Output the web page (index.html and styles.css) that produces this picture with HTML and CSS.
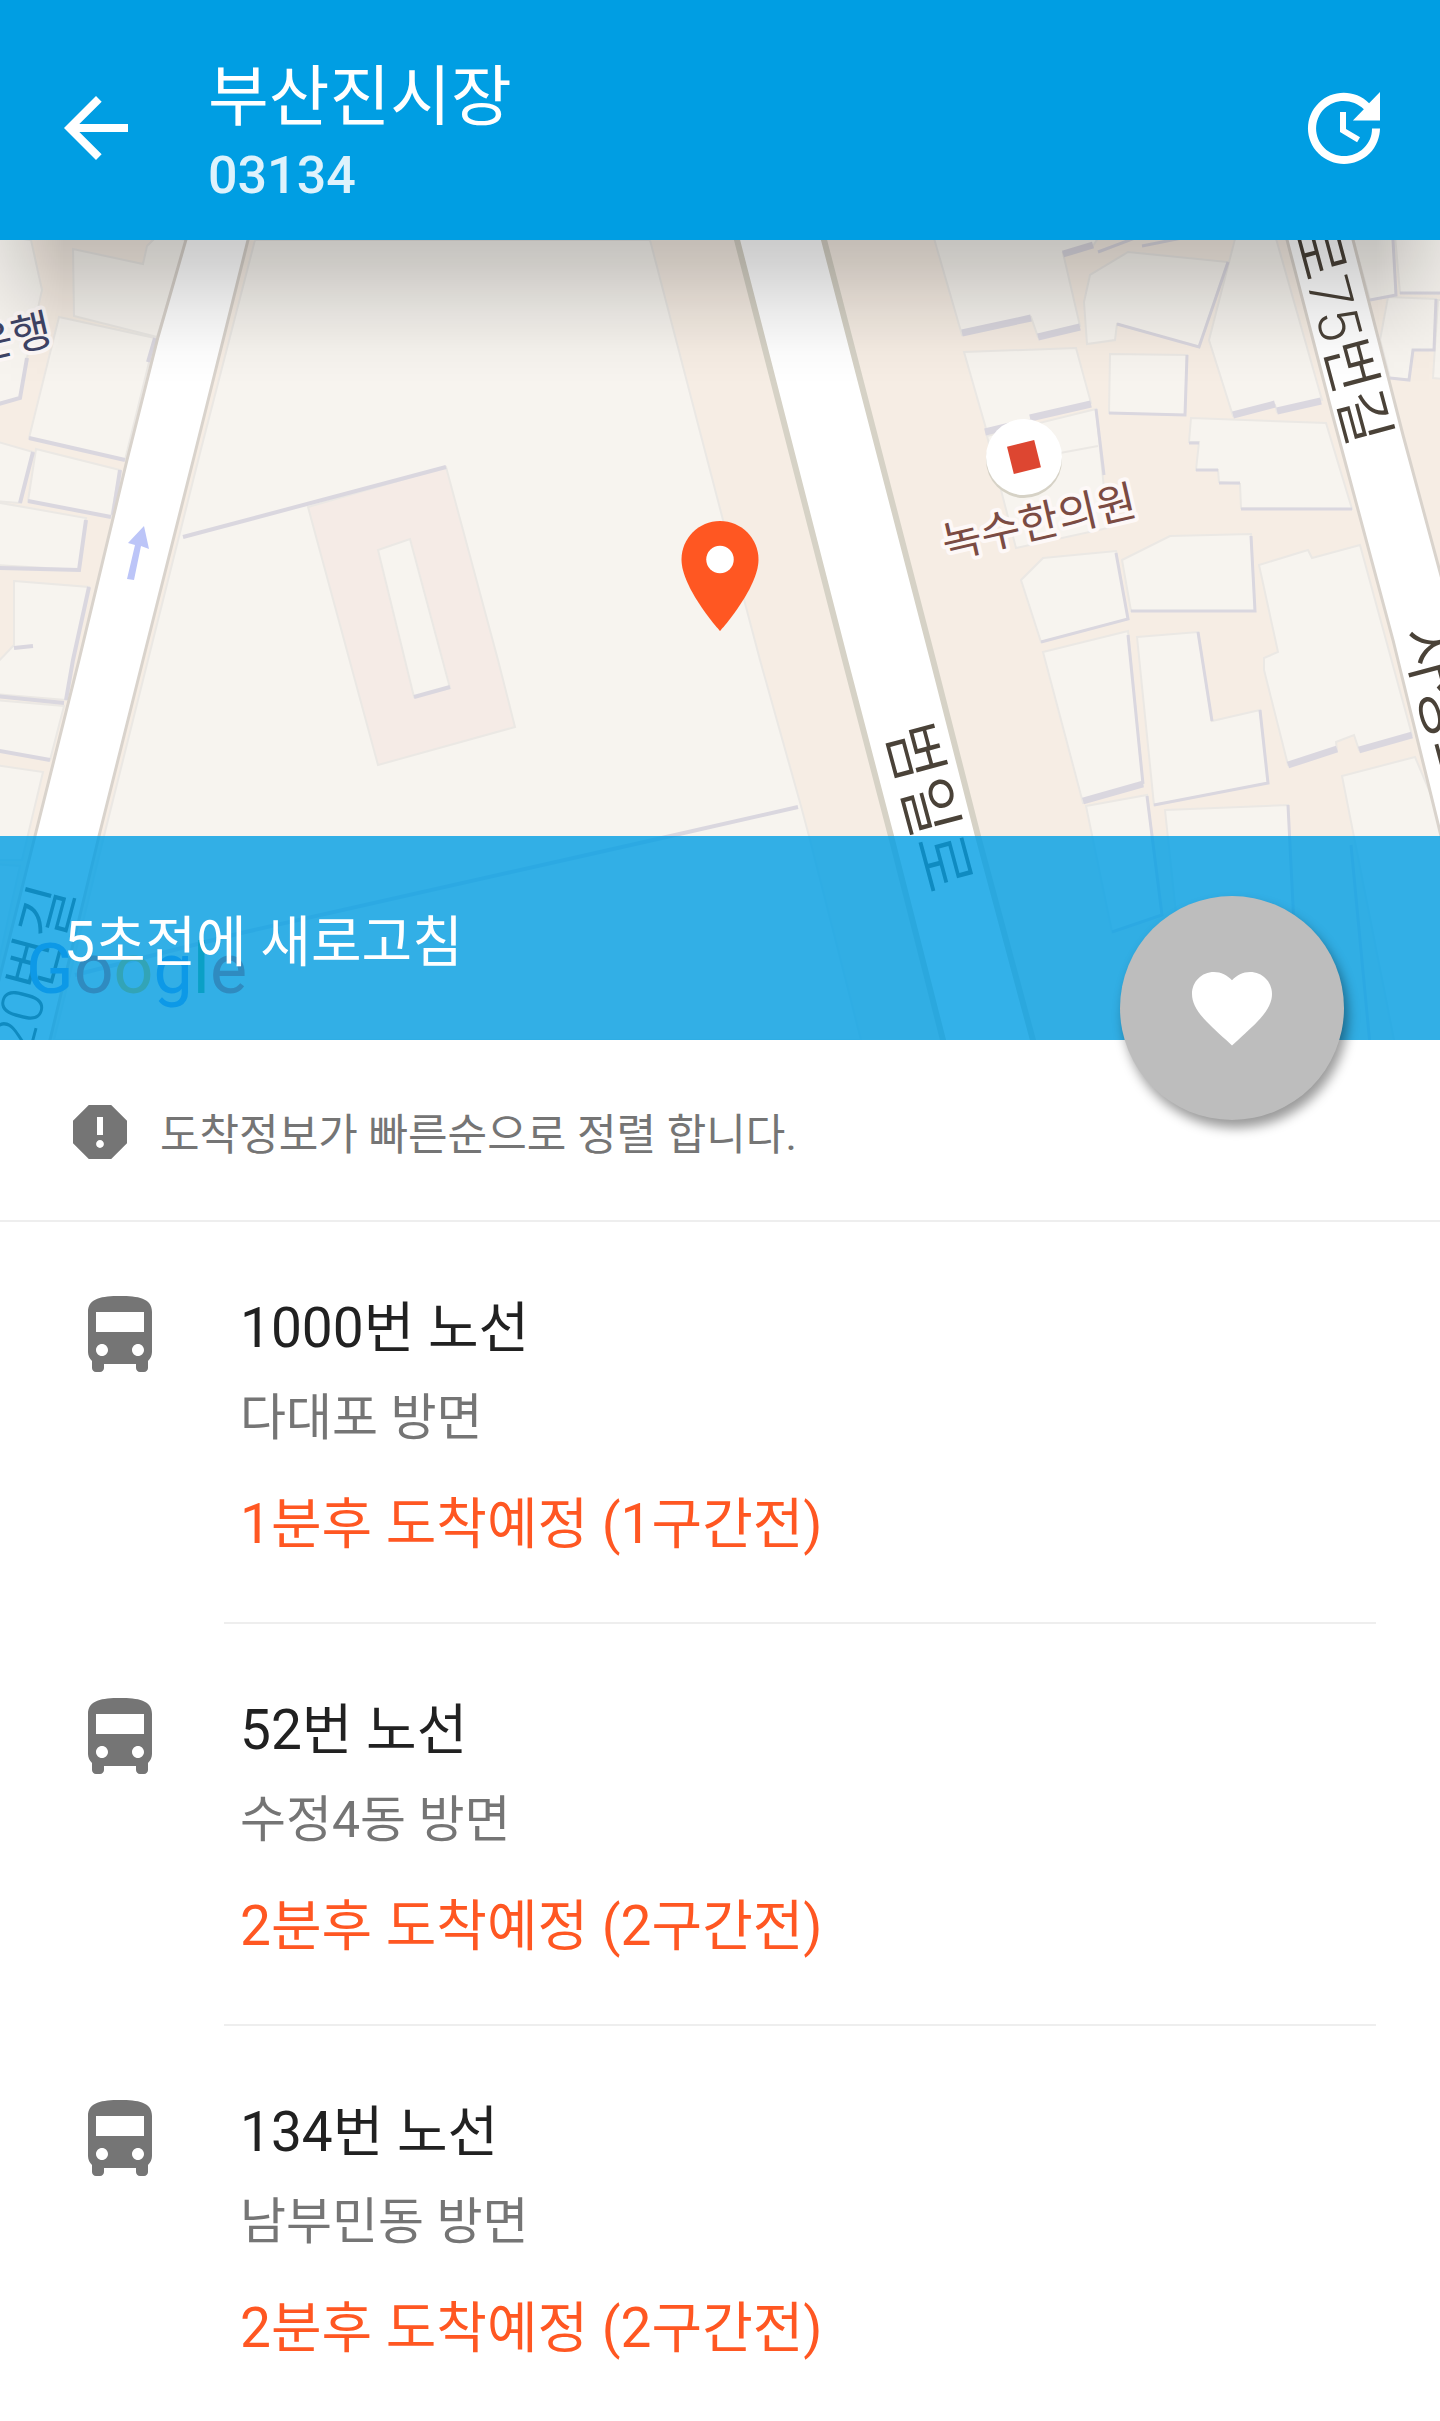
FILE: index.html
```html
<!DOCTYPE html>
<html lang="ko">
<head>
    <meta charset="UTF-8">
    <meta name="viewport" content="width=device-width, initial-scale=1.0">
    <title>부산진시장</title>
    <link rel="stylesheet" href="styles.css">
</head>
<body>
    <!-- Icons used more than once -->
    <svg class="sprite" aria-hidden="true">
        <symbol id="bus" viewBox="0 0 24 24">
            <path d="M4 16c0 .88.39 1.67 1 2.22V20c0 .55.45 1 1 1h1c.55 0 1-.45 1-1v-1h8v1c0 .55.45 1 1 1h1c.55 0 1-.45 1-1v-1.78c.61-.55 1-1.34 1-2.22V6c0-3.5-3.58-4-8-4s-8 .5-8 4v10zm3.5 1c-.83 0-1.5-.67-1.5-1.5S6.67 14 7.5 14s1.5.67 1.5 1.5S8.33 17 7.5 17zm9 0c-.83 0-1.5-.67-1.5-1.5s.67-1.5 1.5-1.5 1.5.67 1.5 1.5-.67 1.5-1.5 1.5zm1.5-6H6V6h12v5z"/>
        </symbol>
    </svg>

    <!-- Top Bar -->
    <header class="top-bar">
        <button class="icon-button" type="button" aria-label="뒤로">
            <svg class="icon" viewBox="0 0 24 24"><path d="M20 11H7.83l5.59-5.59L12 4l-8 8 8 8 1.41-1.41L7.83 13H20v-2z"/></svg>
        </button>
        <div class="top-bar-text">
            <h1>부산진시장</h1>
            <p class="stop-number">03134</p>
        </div>
        <button class="icon-button" type="button" aria-label="새로고침">
            <svg class="icon" viewBox="0 0 24 24"><path d="M21 10.12h-6.78l2.74-2.82c-2.73-2.7-7.15-2.8-9.88-.1-2.73 2.71-2.73 7.08 0 9.79s7.15 2.71 9.88 0C18.32 15.65 19 14.08 19 12.1h2c0 1.98-.88 4.55-2.64 6.29-3.51 3.48-9.21 3.48-12.72 0-3.5-3.47-3.53-9.11-.02-12.58s9.14-3.47 12.65 0L21 3v7.12zM12.5 8v4.25l3.5 2.08-.72 1.21L11 13V8h1.5z"/></svg>
        </button>
    </header>

    <!-- Map -->
    <section class="map">
        <svg class="map-canvas" viewBox="0 240 1440 800" preserveAspectRatio="xMidYMid slice">
            <rect class="ground" y="240" width="1440" height="800"/>

            <!-- Big lot in the middle -->
            <polygon class="lot" points="255,240 650,240 723,520 760,660 801,806 809,836 861,1040 54,1040 104,836 148,660 200,453"/>
            <polygon class="plaza" points="308,507 446,467 498,660 515,727 378,765"/>
            <polygon class="lot" points="378,550 410,539 450,688 414,697"/>
            <path class="shade" d="M183 537L446 467M414 697L450 687M798 807L653 840L241 933L75 975"/>

            <!-- Buildings on the left -->
            <g class="lot">
                <polygon points="-5,235 31,240 42,290 27,358 20,398 -5,404"/>
                <polygon points="73,249 143,264 147,246 158,235 187,240 157,337 74,316"/>
                <polygon points="59,317 155,338 125,460 29,438"/>
                <polygon points="-5,441 33,452 20,503 -5,501"/>
                <polygon points="36,449 120,470 111,517 28,501"/>
                <polygon points="-5,502 86,518 79,570 -5,565"/>
                <polygon points="14,581 89,587 73,660 66,700 -5,694 -5,665 14,645"/>
                <polygon points="-5,700 64,706 50,760 -5,750"/>
                <polygon points="-5,765 43,772 22,860 -5,860"/>
                <polygon points="-5,864 20,866 -10,1000"/>
            </g>
            <path class="shade" d="M-5 405L20 398L27 358M29 438L125 460M155 338L148 362M33 452L20 503M28 501L111 517M120 470L113 515M-5 568L79 570L86 520M89 587L73 660L66 700M-5 696L64 703M-5 750L50 760M14 648L33 646"/>

            <!-- Buildings between the two big roads -->
            <g class="lot">
                <polygon points="933,235 962,335 1031,317 1038,337 1080,326 1063,253 1093,246 1100,235"/>
                <polygon points="1128,252 1228,262 1199,347 1117,324 1115,340 1087,344 1084,302 1090,275"/>
                <polygon points="1236,235 1275,235 1322,400 1277,412 1275,405 1233,416 1209,340"/>
                <polygon points="964,352 1076,348 1091,403 987,432"/>
                <polygon points="1110,354 1187,355 1185,415 1109,413"/>
                <polygon points="987,436 1096,409 1108,528 1016,548"/>
                <polygon points="1191,418 1326,423 1352,509 1241,508 1240,484 1219,482 1218,470 1196,470 1199,442 1189,442"/>
                <polygon points="1021,580 1043,558 1116,551 1128,619 1041,642"/>
                <polygon points="1122,560 1170,536 1251,534 1255,611 1131,611"/>
                <polygon points="1259,565 1308,550 1312,558 1360,545 1412,735 1359,750 1354,735 1336,742 1337,750 1288,765 1264,670 1264,658 1278,652"/>
                <polygon points="1043,652 1128,631 1143,785 1083,803"/>
                <polygon points="1137,637 1198,632 1212,721 1260,710 1268,783 1154,805"/>
                <polygon points="1086,806 1147,795 1162,915 1112,932"/>
                <polygon points="1165,810 1288,805 1300,1045 1190,1045"/>
                <polygon points="1342,776 1415,757 1450,840 1450,1045 1395,1045"/>
                <path d="M1060 453L1098 446"/>
            </g>
            <path class="shade thick" d="M962 333L1031 318M1038 337L1080 327M1063 254L1093 245M1030 418L1091 404M985 432L1010 426M1233 415L1275 404M1277 411L1321 401M1083 801L1143 784M1288 765L1337 749M1359 750L1412 735"/>
            <path class="shade thin" d="M1228 262L1199 347L1117 324M1098 252L1135 238M1142 246L1182 238M1187 355L1185 415L1109 413M1096 409L1104 475M1189 443H1199M1196 470H1218M1219 483H1240M1241 509H1352M1041 642L1128 619L1116 553M1131 611H1255L1251 536M1128 635L1143 784M1198 632L1212 721M1260 710L1268 783L1154 805M1112 932L1162 915L1147 796M1288 805L1300 1045M1351 845L1370 1045"/>

            <!-- Buildings on the right -->
            <g class="lot">
                <polygon points="1352,235 1393,235 1396,296 1370,300"/>
                <polygon points="1395,235 1450,235 1450,294 1400,293"/>
                <polygon points="1388,297 1436,299 1434,350 1413,350 1409,380 1390,378 1380,340"/>
                <polygon points="1438,300 1450,300 1450,380 1433,378"/>
            </g>
            <path class="shade thin" d="M1370 300L1396 295L1393 240M1400 293H1445M1436 299L1434 350L1413 350L1409 380L1390 378"/>

            <!-- Roads -->
            <path class="road small" d="M187 236L158 337L127 460L79 660L35 836L-17 1044H49L99 836L143 660L195 453L249 236Z"/>
            <path class="road" d="M736 236L845 660L891 836L944 1044H1034L978 836L933 660L823 236Z"/>
            <path class="road small" d="M1286 236L1332 413L1393 640L1442 840H1480V720L1403 435L1352 236Z"/>
            <path class="way" d="M144 526L149 549L141 546L134 580L127 579L135 545L128 543Z"/>

            <!-- Labels -->
            <text class="road-name" transform="translate(886 730) rotate(75)">범일로</text>
            <text class="road-name alley" transform="translate(1351 448) rotate(75)" text-anchor="end">로75번길</text>
            <text class="road-name" transform="translate(1402 632) rotate(75)">자성로</text>
            <text class="road-name alley" transform="translate(74 892) rotate(-75)" text-anchor="end">20번길</text>
            <text class="place bank" transform="translate(54 343) rotate(-13)" text-anchor="end">은행</text>
            <circle class="place-shade" cx="1024" cy="460" r="38"/>
            <circle class="place-dot" cx="1024" cy="457" r="38"/>
            <rect class="place-mark" x="1010" y="443" width="28" height="28" transform="rotate(-14 1024 457)"/>
            <text class="place" transform="translate(946 559) rotate(-13)">녹수한의원</text>

            <text class="google" x="26" y="993"><tspan class="g-blue">G</tspan><tspan class="g-red">o</tspan><tspan class="g-yellow">o</tspan><tspan class="g-blue">g</tspan><tspan class="g-green">l</tspan><tspan class="g-red">e</tspan></text>

            <!-- Pin -->
            <svg x="654" y="510" width="132" height="132" viewBox="0 0 24 24">
                <path class="pin" d="M12 2C8.13 2 5 5.13 5 9c0 5.25 7 13 7 13s7-7.75 7-13c0-3.87-3.13-7-7-7z"/>
                <circle class="pin-hole" cx="12" cy="9" r="2.5"/>
            </svg>
        </svg>
        <p class="refresh-bar">5초전에 새로고침</p>
        <button class="favorite" type="button" aria-label="즐겨찾기">
            <svg class="icon" viewBox="0 0 24 24"><path d="M12 21.35l-1.45-1.32C5.4 15.36 2 12.28 2 8.5 2 5.42 4.42 3 7.5 3c1.74 0 3.41.81 4.5 2.09C13.09 3.81 14.76 3 16.5 3 19.58 3 22 5.42 22 8.5c0 3.78-3.4 6.86-8.55 11.54L12 21.35z"/></svg>
        </button>
    </section>

    <!-- Notice -->
    <div class="notice">
        <svg class="notice-icon" viewBox="0 0 24 24"><path d="M15.73 3H8.27L3 8.27v7.46L8.27 21h7.46L21 15.73V8.27L15.73 3zM12 17.3c-.72 0-1.3-.58-1.3-1.3 0-.72.58-1.3 1.3-1.3.72 0 1.3.58 1.3 1.3 0 .72-.58 1.3-1.3 1.3zm1-4.3h-2V7h2v6z"/></svg>
        <p>도착정보가 빠른순으로 정렬 합니다.</p>
    </div>

    <!-- Bus List -->
    <ul class="bus-list">
        <li class="bus">
            <svg class="bus-icon"><use href="#bus"/></svg>
            <div class="bus-info">
                <h2>1000번 노선</h2>
                <p class="direction">다대포 방면</p>
                <p class="arrival">1분후 도착예정 (1구간전)</p>
            </div>
        </li>
        <li class="bus">
            <svg class="bus-icon"><use href="#bus"/></svg>
            <div class="bus-info">
                <h2>52번 노선</h2>
                <p class="direction">수정4동 방면</p>
                <p class="arrival">2분후 도착예정 (2구간전)</p>
            </div>
        </li>
        <li class="bus">
            <svg class="bus-icon"><use href="#bus"/></svg>
            <div class="bus-info">
                <h2>134번 노선</h2>
                <p class="direction">남부민동 방면</p>
                <p class="arrival">2분후 도착예정 (2구간전)</p>
            </div>
        </li>
    </ul>
</body>
</html>
```
FILE: styles.css
```css
/* General Reset */
* {
    margin: 0;
    padding: 0;
    box-sizing: border-box;
}

body {
    font-family: Roboto, "Noto Sans CJK KR", sans-serif;
    background: #fff;
    color: #212121;
}

h1,
h2 {
    font-weight: 400;
}

.sprite {
    display: none;
}

.icon {
    display: block;
    width: 96px;
    height: 96px;
    fill: #fff;
}

/* Top Bar Styling */
.top-bar {
    position: relative;
    z-index: 1;
    display: flex;
    align-items: center;
    height: 240px;
    padding: 16px 48px 0;
    background: #009ee3;
    color: #fff;
}

.top-bar-text {
    flex: 1;
    padding: 16px 0 0 64px;
}

.top-bar h1 {
    font-size: 66px;
    line-height: 80px;
}

.stop-number {
    font-size: 52px;
    font-weight: 500;
    line-height: 76px;
    color: rgba(255, 255, 255, 0.87);
}

.icon-button {
    border: none;
    background: none;
    cursor: pointer;
}

/* Map Styling */
.map {
    position: relative;
}

.map-canvas {
    display: block;
    width: 100%;
    height: 800px;
}

/* Shadow the top bar drops on the map */
.map::before {
    content: "";
    position: absolute;
    inset: 0;
    background: linear-gradient(rgba(0, 0, 0, 0.2), rgba(0, 0, 0, 0.17) 24px, rgba(0, 0, 0, 0.08) 72px, rgba(0, 0, 0, 0.02) 112px, transparent 144px);
    -webkit-mask-image: linear-gradient(90deg, rgba(0, 0, 0, 0.4), #000 64px, #000 calc(100% - 64px), rgba(0, 0, 0, 0.4));
    mask-image: linear-gradient(90deg, rgba(0, 0, 0, 0.4), #000 64px, #000 calc(100% - 64px), rgba(0, 0, 0, 0.4));
}

.ground {
    fill: #f6ede4;
}

.lot {
    fill: #f7f4ef;
    stroke: #ebe8e4;
    stroke-width: 2;
}

.plaza {
    fill: #f5ebe6;
    stroke: #ebe8e4;
    stroke-width: 2;
}

.shade {
    fill: none;
    stroke: #dad7df;
    stroke-width: 4;
}

.thick {
    stroke-width: 7;
}

.thin {
    stroke-width: 3;
}

.road {
    fill: #fff;
    stroke: #d6d2c6;
    stroke-width: 6;
}

.small {
    stroke: #d9d3cc;
    stroke-width: 3;
}

.way {
    fill: #bcc5f8;
}

.road-name {
    font-size: 62px;
    font-weight: 350;
    fill: #4a4238;
}

.alley {
    font-size: 58px;
}

.place {
    font-size: 43px;
    fill: #7b4b43;
    stroke: #fdf8f7;
    stroke-width: 8;
    stroke-linejoin: round;
    paint-order: stroke;
}

.bank {
    fill: #3f4466;
}

.place-shade {
    fill: #d6d2c6;
}

.place-dot,
.pin-hole {
    fill: #fff;
}

.place-mark {
    fill: #dd4631;
}

.pin {
    fill: #ff5722;
}

.google {
    font-size: 70px;
}

.g-blue {
    fill: #4285f4;
}

.g-red {
    fill: #ea4335;
}

.g-yellow {
    fill: #fbbc05;
}

.g-green {
    fill: #34a853;
}

.refresh-bar {
    position: absolute;
    left: 0;
    right: 0;
    bottom: 0;
    padding: 66px 64px 58px;
    background: rgba(0, 158, 227, 0.8);
    color: #fff;
    font-size: 55px;
    line-height: 80px;
}

.favorite {
    position: absolute;
    right: 96px;
    bottom: -80px;
    display: flex;
    align-items: center;
    justify-content: center;
    width: 224px;
    height: 224px;
    border: none;
    border-radius: 50%;
    background: #bdbdbd;
    box-shadow: 4px 8px 12px rgba(0, 0, 0, 0.4);
    cursor: pointer;
}

/* Notice Styling */
.notice {
    display: flex;
    align-items: center;
    gap: 24px;
    height: 182px;
    padding: 4px 64px 0;
    border-bottom: 2px solid #eee;
    color: #757575;
    font-size: 43px;
    line-height: 64px;
}

.notice p {
    padding-top: 6px;
}

.notice-icon {
    flex: none;
    width: 72px;
    height: 72px;
    fill: #757575;
}

/* Bus List Styling */
.bus-list {
    list-style: none;
    padding: 0 64px;
}

.bus {
    display: flex;
    align-items: flex-start;
    gap: 56px;
    padding-left: 8px;
}

.bus-icon {
    flex: none;
    width: 96px;
    height: 96px;
    margin-top: 66px;
    fill: #757575;
}

.bus-info {
    flex: 1;
    padding: 66px 16px 58px;
    border-bottom: 2px solid #eee;
}

.bus:last-child .bus-info {
    padding-bottom: 48px;
    border-bottom: none;
}

.bus h2 {
    font-size: 55px;
    line-height: 80px;
}

.direction {
    margin-top: 10px;
    color: #757575;
    font-size: 50px;
    line-height: 80px;
}

.arrival {
    margin-top: 26px;
    color: #ff5722;
    font-size: 55px;
    line-height: 80px;
}
```
